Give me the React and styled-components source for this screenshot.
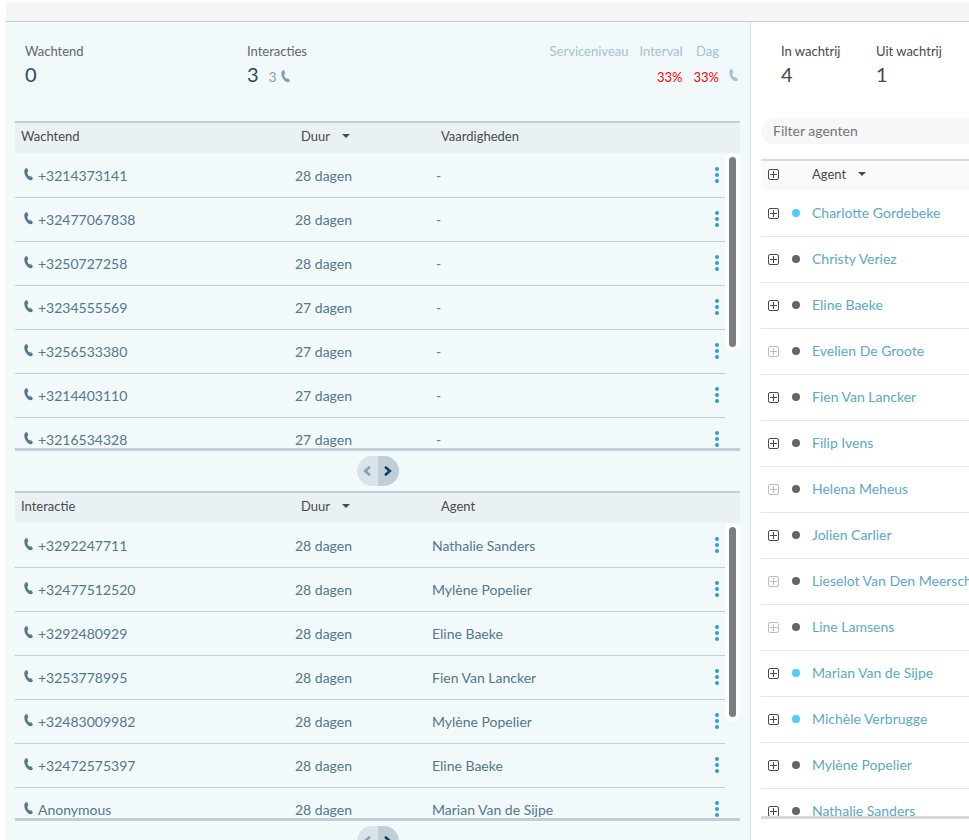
import React, { useState } from "react";
import styled, { createGlobalStyle } from "styled-components";

const GlobalStyle = createGlobalStyle`
	* {
		box-sizing: border-box;
	}
	body {
		margin: 0;
		background: #fff;
		color: #4a4a4a;
		font-family: Lato, "Liberation Sans", sans-serif;
		font-size: 14px;
		line-height: 18px;
	}
	button {
		border: 0;
		padding: 0;
		background: none;
		color: inherit;
		font: inherit;
		cursor: pointer;
	}
	svg {
		display: block;
		flex: none;
	}
`;

const Page = styled.div`
	display: flex;
	flex-direction: column;
	height: 100vh;
	padding: 2px 0 0 6px;
	overflow: hidden;
`;

const TopBar = styled.header`
	flex: none;
	height: 20px;
	background: #f5f5f5;
	border-bottom: 1px solid #c4cdd1;
`;

const Columns = styled.div`
	display: grid;
	grid-template-columns: minmax(0, 1fr) 218px;
	flex: 1;
	min-height: 0;
`;

const QueuePanel = styled.main`
	padding: 0 10px 0 9px;
	background: #f1f9fb;
	border-right: 1px solid #d3e0e6;
	overflow: hidden;
`;

const AgentPanel = styled.aside`
	padding-left: 10px;
	overflow: hidden;
`;

const Stats = styled.div`
	display: flex;
	height: ${(p) => p.$height}px;
	padding: 20px 0 0 ${(p) => p.$indent}px;
`;

const Stat = styled.div`
	flex: none;
	width: ${(p) => p.$width}px;
	color: ${(p) => p.$color || "#4a4a4a"};
	white-space: nowrap;
`;

const StatLabel = styled.div`
	color: ${(p) => p.$color || "inherit"};
	font-size: 13px;
`;

const StatValue = styled.div`
	display: flex;
	align-items: baseline;
	gap: 10px;
	margin-top: 2px;
	font-size: 20px;
	line-height: 24px;
`;

const SubValue = styled.span`
	display: flex;
	align-items: center;
	gap: 4px;
	color: #82a2b2;
	font-size: 14px;
	line-height: 18px;
`;

const ServiceTable = styled.table`
	align-self: flex-start;
	margin-left: auto;
	border-collapse: collapse;
	color: #a5c1d0;
	font-size: 13px;
	text-align: right;

	th,
	td {
		padding: 0 0 0 11px;
		font-weight: normal;
	}
	td {
		padding-top: 8px;
	}
	td:last-child {
		padding: 7px 2px 0 10px;
	}
`;

const Percent = styled.td`
	color: #f00;
`;

const TableWrap = styled.div`
	position: relative;
`;

const Table = styled.table`
	display: block;
	border-top: 2px solid ${(p) => p.$line};
	border-bottom: 3px solid ${(p) => p.$line};

	thead,
	tbody {
		display: block;
	}
`;

const queueColumns = "280px 137px 1fr 15px";
const agentColumns = "25px 26px 1fr";

const HeadRow = styled.tr`
	display: grid;
	grid-template-columns: ${(p) => p.$columns};
	height: 30px;
	padding-top: 4px;
	background: ${(p) => p.$fill};
`;

const HeadCell = styled.th`
	display: flex;
	align-items: center;
	height: 18px;
	padding: 0 0 0 ${(p) => p.$inset || 0}px;
	font-size: 13px;
	font-weight: normal;
	white-space: nowrap;
`;

const SortButton = styled.button`
	display: flex;
	align-items: center;
	gap: 12px;

	&::after {
		content: "";
		border: 4px solid transparent;
		border-top-color: #4a4a4a;
		border-bottom: 0;
	}
`;

const QueueBody = styled.tbody`
	height: 295px;
	padding: 1px 15px 0 0;
	overflow: hidden;
`;

const QueueRow = styled.tr`
	display: grid;
	grid-template-columns: ${queueColumns};
	align-items: center;
	height: 44px;
	border-bottom: 1px solid #c0cfd7;
	color: #54778a;
`;

const Cell = styled.td`
	display: flex;
	align-items: center;
	gap: ${(p) => p.$gap || 0}px;
	padding: 0 0 0 ${(p) => p.$inset || 0}px;
	white-space: nowrap;
`;

const MenuButton = styled.button`
	display: flex;
	padding-bottom: 2px;
	color: #2a9fd6;
`;

const Track = styled.div`
	position: absolute;
	top: 32px;
	right: 0;
	width: 15px;
	height: 198px;
	padding: 4px;
	background: #fff;
	border-radius: 8px;
`;

const Thumb = styled.div`
	height: 100%;
	background: #7b7f80;
	border-radius: 4px;
`;

const Pager = styled.nav`
	display: flex;
	justify-content: center;
	padding: 5px 0;
`;

const PagerButton = styled.button`
	display: flex;
	align-items: center;
	justify-content: center;
	width: 21px;
	height: 30px;
	background: ${(p) => (p.disabled ? "#d9e4e9" : "#c0cfd7")};
	color: ${(p) => (p.disabled ? "#82a2b2" : "#0b4462")};

	&:first-child {
		border-radius: 15px 0 0 15px;
	}
	&:last-child {
		border-radius: 0 15px 15px 0;
	}
`;

const FilterInput = styled.input`
	display: block;
	width: 100%;
	height: 26px;
	margin-bottom: 15px;
	padding: 0 12px 2px;
	border: 0;
	border-radius: 13px 0 0 13px;
	background: #f7f7f7;
	color: #4a4a4a;
	font: inherit;
	outline: 0;

	&::placeholder {
		color: #757575;
	}
`;

const AgentBody = styled.tbody`
	height: 625px;
	overflow: hidden;
`;

const AgentRow = styled.tr`
	display: grid;
	grid-template-columns: ${agentColumns};
	align-items: center;
	height: 46px;
	padding-bottom: 2px;
	border-bottom: 1px solid #e5e5e5;
`;

const ExpandButton = styled.button`
	display: flex;
	margin-left: 7px;
	padding-top: 2px;
	color: ${(p) => (p.disabled ? "#bdbdbd" : "#4a4a4a")};
`;

const Status = styled.span`
	width: 8px;
	height: 8px;
	margin-left: 6px;
	border-radius: 50%;
	background: ${(p) => (p.$online ? "#54cbf7" : "#666")};
`;

const AgentLink = styled.a`
	color: #5ba9c7;
	text-decoration: none;
	white-space: nowrap;
`;

const PhoneIcon = () => (
	<svg width="9" height="15" viewBox="0 0 9 15" fill="currentColor" aria-hidden="true">
		<path d="M1.600.6C2.400 0 3.400 0 3.600.9L4.200 3.200C4.300 3.900 3.300 4.200 3.300 4.700C3.500 6.300 4.300 7.600 5.300 8.500C5.800 8.800 6.700 8 7.300 8.500L8.700 10.100C9.200 10.900 8 12.300 7 12.300C3.600 12.300.3 7.600.3 3.600C.3 2.300.8 1.200 1.600.6Z" />
	</svg>
);

const DotsIcon = () => (
	<svg width="4" height="16" viewBox="0 0 4 16" fill="currentColor" aria-hidden="true">
		<circle cx="2" cy="2" r="2" />
		<circle cx="2" cy="8" r="2" />
		<circle cx="2" cy="14" r="2" />
	</svg>
);

const PlusIcon = () => (
	<svg width="12" height="12" viewBox="0 0 12 12" fill="none" stroke="currentColor" aria-hidden="true">
		<rect x=".5" y=".5" width="10" height="10" rx="1.500" />
		<path d="M5.500 2v7M2 5.500h7" />
	</svg>
);

const Chevron = ({ flip }) => (
	<svg width="8" height="10" viewBox="0 0 8 10" fill="none" stroke="currentColor" strokeWidth="2.600" aria-hidden="true">
		<path d={flip ? "M7 .8 2.200 5 7 9.200" : "M1 .8 5.800 5 1 9.200"} />
	</svg>
);

const waiting = [
	["+3214373141", "28 dagen", "-"],
	["+32477067838", "28 dagen", "-"],
	["+3250727258", "28 dagen", "-"],
	["+3234555569", "27 dagen", "-"],
	["+3256533380", "27 dagen", "-"],
	["+3214403110", "27 dagen", "-"],
	["+3216534328", "27 dagen", "-"],
];

const interactions = [
	["+3292247711", "28 dagen", "Nathalie Sanders"],
	["+32477512520", "28 dagen", "Mylène Popelier"],
	["+3292480929", "28 dagen", "Eline Baeke"],
	["+3253778995", "28 dagen", "Fien Van Lancker"],
	["+32483009982", "28 dagen", "Mylène Popelier"],
	["+32472575397", "28 dagen", "Eline Baeke"],
	["Anonymous", "28 dagen", "Marian Van de Sijpe"],
];

const agents = [
	{ name: "Charlotte Gordebeke", online: true },
	{ name: "Christy Veriez" },
	{ name: "Eline Baeke" },
	{ name: "Evelien De Groote", empty: true },
	{ name: "Fien Van Lancker" },
	{ name: "Filip Ivens" },
	{ name: "Helena Meheus", empty: true },
	{ name: "Jolien Carlier" },
	{ name: "Lieselot Van Den Meersche", empty: true },
	{ name: "Line Lamsens", empty: true },
	{ name: "Marian Van de Sijpe", online: true },
	{ name: "Michèle Verbrugge", online: true },
	{ name: "Mylène Popelier" },
	{ name: "Nathalie Sanders" },
];

function QueueTable({ title, lastTitle, rows, lastInset }) {
	return (
		<>
			<TableWrap>
				<Table $line="#c0cfd7">
					<thead>
						<HeadRow $columns={queueColumns} $fill="#e9f1f4">
							<HeadCell $inset={6}>{title}</HeadCell>
							<HeadCell $inset={6}>
								<SortButton>Duur</SortButton>
							</HeadCell>
							<HeadCell $inset={9}>{lastTitle}</HeadCell>
						</HeadRow>
					</thead>
					<QueueBody>
						{rows.map(([number, duration, last]) => (
							<QueueRow key={number}>
								<Cell $inset={9} $gap={5}>
									<PhoneIcon />
									{number}
								</Cell>
								<Cell>{duration}</Cell>
								<Cell $inset={lastInset}>{last}</Cell>
								<Cell $inset={5}>
									<MenuButton aria-label={`Acties voor ${number}`}>
										<DotsIcon />
									</MenuButton>
								</Cell>
							</QueueRow>
						))}
					</QueueBody>
				</Table>
				<Track>
					<Thumb />
				</Track>
			</TableWrap>
			<Pager aria-label={title}>
				<PagerButton disabled aria-label="Vorige">
					<Chevron flip />
				</PagerButton>
				<PagerButton aria-label="Volgende">
					<Chevron />
				</PagerButton>
			</Pager>
		</>
	);
}

function App() {
	const [filter, setFilter] = useState("");

	const shown = agents.filter((a) => a.name.toLowerCase().includes(filter.toLowerCase()));

	return (
		<Page>
			<GlobalStyle />
			<TopBar />
			<Columns>
				<QueuePanel>
					<Stats $height={99} $indent={10}>
						<Stat $width={222} $color="#1f4b66">
							<StatLabel $color="#666">Wachtend</StatLabel>
							<StatValue>0</StatValue>
						</Stat>
						<Stat $width={100} $color="#1f4b66">
							<StatLabel $color="#666">Interacties</StatLabel>
							<StatValue>
								3
								<SubValue>
									3 <PhoneIcon />
								</SubValue>
							</StatValue>
						</Stat>
						<ServiceTable>
							<thead>
								<tr>
									<th>Serviceniveau</th>
									<th>Interval</th>
									<th>Dag</th>
								</tr>
							</thead>
							<tbody>
								<tr>
									<td />
									<Percent>33%</Percent>
									<Percent>33%</Percent>
									<td>
										<PhoneIcon />
									</td>
								</tr>
							</tbody>
						</ServiceTable>
					</Stats>
					<QueueTable title="Wachtend" lastTitle="Vaardigheden" rows={waiting} lastInset={4} />
					<QueueTable title="Interactie" lastTitle="Agent" rows={interactions} />
				</QueuePanel>
				<AgentPanel>
					<Stats $height={96} $indent={20}>
						<Stat $width={95}>
							<StatLabel>In wachtrij</StatLabel>
							<StatValue>4</StatValue>
						</Stat>
						<Stat $width={95}>
							<StatLabel>Uit wachtrij</StatLabel>
							<StatValue>1</StatValue>
						</Stat>
					</Stats>
					<FilterInput
						type="text"
						placeholder="Filter agenten"
						aria-label="Filter agenten"
						value={filter}
						onChange={(e) => setFilter(e.target.value)}
					/>
					<Table $line="#d9d9d9">
						<thead>
							<HeadRow $columns={agentColumns} $fill="#fafafa">
								<HeadCell>
									<ExpandButton aria-label="Alles uitklappen">
										<PlusIcon />
									</ExpandButton>
								</HeadCell>
								<HeadCell />
								<HeadCell>
									<SortButton>Agent</SortButton>
								</HeadCell>
							</HeadRow>
						</thead>
						<AgentBody>
							{shown.map((agent) => (
								<AgentRow key={agent.name}>
									<Cell>
										<ExpandButton disabled={agent.empty} aria-label={`${agent.name} uitklappen`}>
											<PlusIcon />
										</ExpandButton>
									</Cell>
									<Cell>
										<Status $online={agent.online} />
									</Cell>
									<Cell>
										<AgentLink href="#">{agent.name}</AgentLink>
									</Cell>
								</AgentRow>
							))}
						</AgentBody>
					</Table>
				</AgentPanel>
			</Columns>
		</Page>
	);
}

export default App;
